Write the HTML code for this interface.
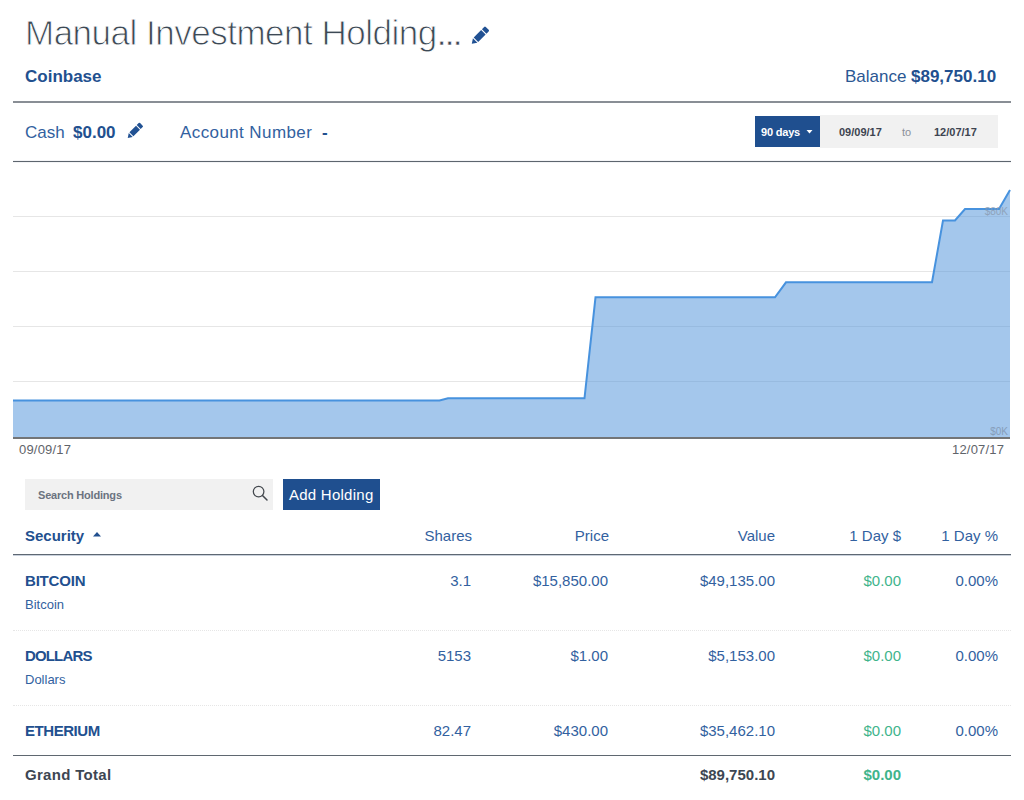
<!DOCTYPE html>
<html><head><meta charset="utf-8">
<style>
*{margin:0;padding:0;box-sizing:border-box}
html,body{width:1024px;height:800px;overflow:hidden;background:#fff}
body{font-family:"Liberation Sans",sans-serif;color:#3261a0;position:relative}
.a{position:absolute;white-space:nowrap;line-height:1}
.b{font-weight:bold}
.bx{position:absolute}
.g{color:#3fb48b}
.t15{font-size:15px}
.rt{text-align:right}
</style></head><body>
<!-- Title -->
<div class="a" id="title" style="left:25px;top:15px;font-size:35px;letter-spacing:-0.5px;color:#3d4955;-webkit-text-stroke:0.9px #fff">Manual Investment Holding<span style="letter-spacing:-1.7px;-webkit-text-stroke:0.5px #fff">...</span></div>
<svg class="a" style="left:0;top:0" width="500" height="50"><g transform="translate(471.8,43.8) rotate(-45) scale(1.13)"><path d="M0 0 L4.2 -2.8 L4.2 2.8 Z M5.2 -2.8 H14.5 V2.8 H5.2 Z M15.5 -2.8 H18.3 Q19.3 -2.8 19.3 -1.8 V1.8 Q19.3 2.8 18.3 2.8 H15.5 Z" fill="#215193"/></g></svg>
<div class="a b" id="coinbase" style="left:25px;top:68px;font-size:17px;color:#22508f">Coinbase</div>
<div class="a" id="balance" style="left:845px;top:68px;font-size:17px;color:#2b5793">Balance</div>
<div class="a b" id="balval" style="left:911px;top:68px;font-size:17px;color:#22508f">$89,750.10</div>
<div class="bx" style="left:13px;top:101px;width:998px;height:2px;background:#898e95"></div>
<!-- Cash row -->
<div class="a" id="cash" style="left:25px;top:124px;font-size:17px">Cash</div>
<div class="a b" id="cashval" style="left:73px;top:124px;font-size:17px;color:#22508f">$0.00</div>
<svg class="a" style="left:100px;top:110px" width="60" height="40"><g transform="translate(27.75,28) rotate(-45)"><path d="M0 0 L4.2 -2.8 L4.2 2.8 Z M5.2 -2.8 H14.5 V2.8 H5.2 Z M15.5 -2.8 H18.3 Q19.3 -2.8 19.3 -1.8 V1.8 Q19.3 2.8 18.3 2.8 H15.5 Z" fill="#215193"/></g></svg>
<div class="a" id="acct" style="left:180px;top:124px;font-size:17px;letter-spacing:0.4px">Account Number</div>
<div class="a b" id="acctval" style="left:322px;top:124px;font-size:17px;color:#22508f">-</div>
<div class="bx" style="left:755px;top:116px;width:65px;height:31px;background:#1f4f8f"></div>
<div class="a b" id="days" style="left:761px;top:127px;font-size:11px;color:#fff;letter-spacing:-0.2px">90 days</div>
<svg class="a" style="left:806px;top:130px" width="7" height="4"><path d="M0.5 0H6.5L3.5 3.5Z" fill="#fff"/></svg>
<div class="bx" style="left:820px;top:115px;width:178px;height:33px;background:#f1f1f1"></div>
<div class="a b" id="d1" style="left:839px;top:127px;font-size:11px;color:#3d4450">09/09/17</div>
<div class="a" id="to" style="left:902px;top:127px;font-size:11px;color:#8a9099">to</div>
<div class="a b" id="d2" style="left:934px;top:127px;font-size:11px;color:#3d4450">12/07/17</div>
<div class="bx" style="left:13px;top:160px;width:998px;height:1px;background:#f3f4f6"></div>
<div class="bx" style="left:13px;top:161px;width:998px;height:1px;background:#5d656e"></div>
<div class="bx" style="left:13px;top:162px;width:998px;height:1px;background:#f3f4f6"></div>
<!-- Chart -->
<svg class="a" style="left:0;top:0" width="1024" height="460">
<rect x="13" y="216" width="997" height="1" fill="#e6e6e6"/>
<rect x="13" y="271" width="997" height="1" fill="#e6e6e6"/>
<rect x="13" y="326" width="997" height="1" fill="#e6e6e6"/>
<rect x="13" y="381" width="997" height="1" fill="#e6e6e6"/>
<path d="M13 400.5 L439.5 400.5 L448 398.3 L584.5 398.3 L595.5 297.3 L775 297.3 L786 282.3 L932 282.3 L943 220.5 L955 220.5 L965 209 L999 209 L1010 190 L1010 437 L13 437 Z" fill="#4a90d9" fill-opacity="0.5"/>
<path d="M13 400.5 L439.5 400.5 L448 398.3 L584.5 398.3 L595.5 297.3 L775 297.3 L786 282.3 L932 282.3 L943 220.5 L955 220.5 L965 209 L999 209 L1010 190" fill="none" stroke="#4792de" stroke-width="2"/>
<rect x="13" y="437" width="997" height="2" fill="#737577"/>
<text x="1008" y="215" text-anchor="end" font-family="Liberation Sans" font-size="10" fill="#8a9bb0" opacity="0.8">$80K</text>
<text x="1008" y="435" text-anchor="end" font-family="Liberation Sans" font-size="10" fill="#7f93ac" opacity="0.8">$0K</text>
</svg>
<div class="a" id="cd1" style="left:19px;top:443px;font-size:13px;color:#5f646a;letter-spacing:0.2px">09/09/17</div>
<div class="a" id="cd2" style="left:952px;top:443px;font-size:13px;color:#5f646a;letter-spacing:0.2px">12/07/17</div>
<!-- Search -->
<div class="bx" style="left:25px;top:479px;width:248px;height:31px;background:#f1f1f1"></div>
<div class="a b" id="search" style="left:38px;top:490px;font-size:11px;color:#6b7380;letter-spacing:-0.2px">Search Holdings</div>
<svg class="a" style="left:250px;top:483px" width="20" height="20" viewBox="0 0 20 20"><circle cx="8.6" cy="8.6" r="5.3" fill="none" stroke="#43484e" stroke-width="1.25"/><path d="M12.5 12.5 L17 17" stroke="#43484e" stroke-width="1.5" stroke-linecap="round"/></svg>
<div class="bx" style="left:283px;top:479px;width:97px;height:31px;background:#1f4f8f"></div>
<div class="a" id="addh" style="left:289px;top:487px;font-size:15px;color:#fff;letter-spacing:0.25px">Add Holding</div>
<!-- Table header -->
<div class="a b t15" id="security" style="left:25px;top:528px;color:#22508f">Security</div>
<svg class="a" style="left:93px;top:532px" width="8" height="5"><path d="M0 4.5H8L4 0Z" fill="#22508f"/></svg>
<div class="a t15 rt" id="h_sh" style="right:552px;top:528px">Shares</div>
<div class="a t15 rt" id="h_pr" style="right:415px;top:528px">Price</div>
<div class="a t15 rt" id="h_va" style="right:249px;top:528px">Value</div>
<div class="a t15 rt" id="h_d1" style="right:123px;top:528px">1 Day $</div>
<div class="a t15 rt" id="h_d2" style="right:26px;top:528px">1 Day %</div>
<div class="bx" style="left:13px;top:554px;width:998px;height:1px;background:#5f6873"></div>
<div class="bx" style="left:13px;top:555px;width:998px;height:1px;background:#c9d1dc"></div>
<!-- rows -->
<div class="a b t15" style="left:25px;top:573px;color:#22508f;letter-spacing:-0.2px">BITCOIN</div>
<div class="a" style="left:25px;top:598px;font-size:13px">Bitcoin</div>
<div class="a t15 rt" style="right:553px;top:573px">3.1</div>
<div class="a t15 rt" style="right:416px;top:573px">$15,850.00</div>
<div class="a t15 rt" style="right:249px;top:573px">$49,135.00</div>
<div class="a t15 rt g" style="right:123px;top:573px">$0.00</div>
<div class="a t15 rt" style="right:26px;top:573px">0.00%</div>
<div class="bx" style="left:13px;top:630px;width:998px;border-top:1px dotted #e6e6e6"></div>

<div class="a b t15" style="left:25px;top:648px;color:#22508f;letter-spacing:-0.85px">DOLLARS</div>
<div class="a" style="left:25px;top:673px;font-size:13px">Dollars</div>
<div class="a t15 rt" style="right:553px;top:648px">5153</div>
<div class="a t15 rt" style="right:416px;top:648px">$1.00</div>
<div class="a t15 rt" style="right:249px;top:648px">$5,153.00</div>
<div class="a t15 rt g" style="right:123px;top:648px">$0.00</div>
<div class="a t15 rt" style="right:26px;top:648px">0.00%</div>
<div class="bx" style="left:13px;top:705px;width:998px;border-top:1px dotted #e6e6e6"></div>

<div class="a b t15" style="left:25px;top:723px;color:#22508f;letter-spacing:-0.45px">ETHERIUM</div>
<div class="a t15 rt" style="right:553px;top:723px">82.47</div>
<div class="a t15 rt" style="right:416px;top:723px">$430.00</div>
<div class="a t15 rt" style="right:249px;top:723px">$35,462.10</div>
<div class="a t15 rt g" style="right:123px;top:723px">$0.00</div>
<div class="a t15 rt" style="right:26px;top:723px">0.00%</div>
<div class="bx" style="left:13px;top:755px;width:998px;height:1px;background:#5f6770"></div>

<div class="a b t15" style="left:25px;top:767px;color:#3d4652;letter-spacing:0.3px">Grand Total</div>
<div class="a b t15 rt" style="right:249px;top:767px;color:#3d4652">$89,750.10</div>
<div class="a b t15 rt g" style="right:123px;top:767px">$0.00</div>
</body></html>
